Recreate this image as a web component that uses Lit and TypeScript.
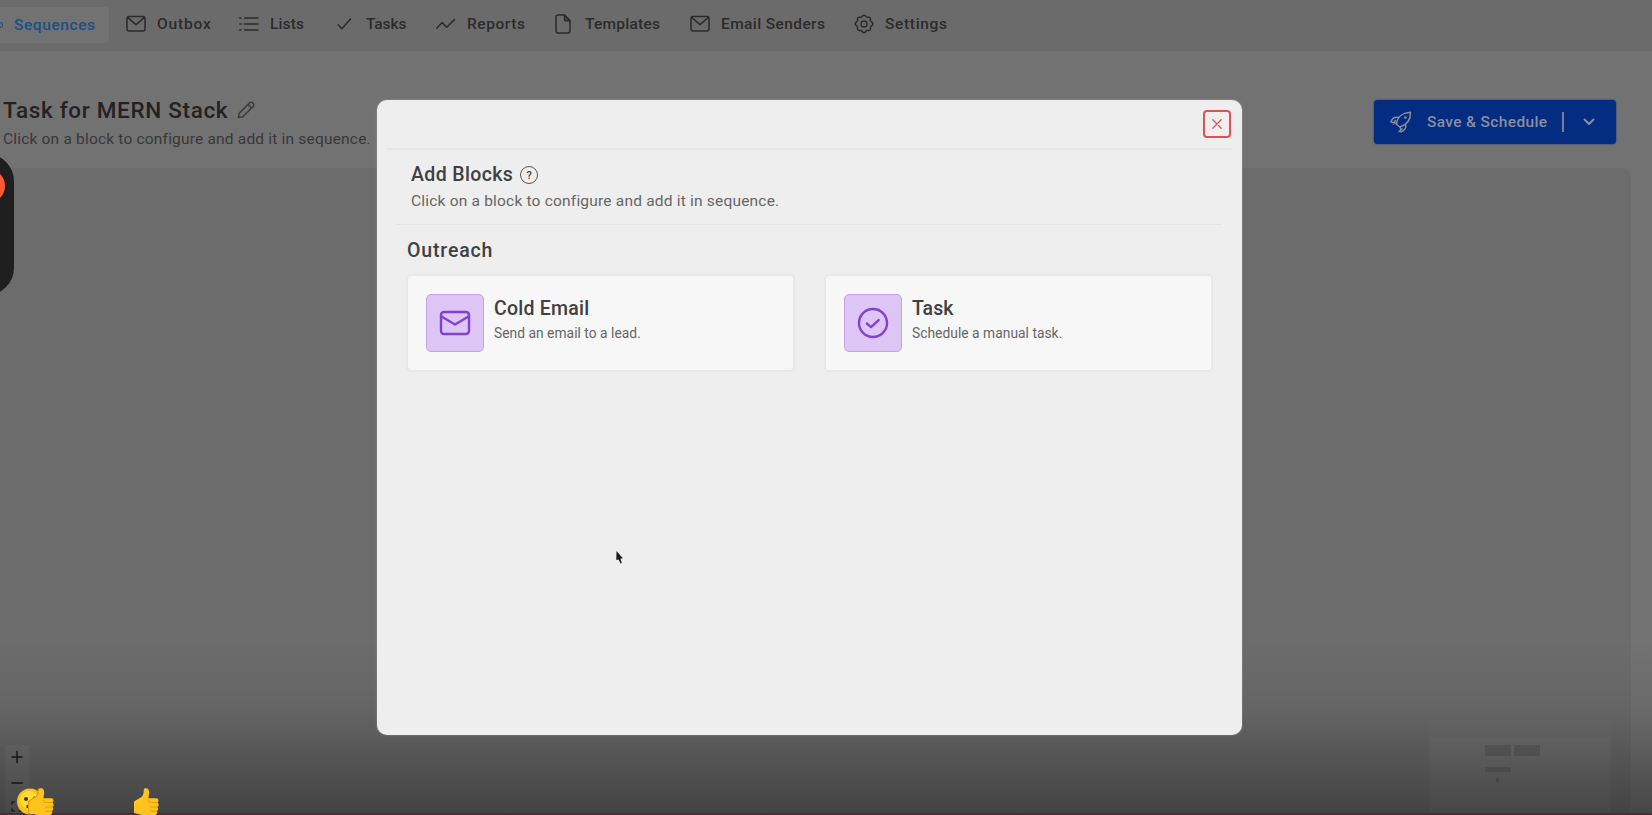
import { LitElement, html, css, svg } from "lit";
import { customElement } from "lit/decorators.js";

const icons: Record<string, unknown> = {
  mail: svg`<rect x="1" y="2.5" width="18" height="14.5" rx="2"/><path d="M1.6 3.4 10 10.6l8.4-7.2"/>`,
  list: svg`<path d="M5.5 4H19M5.5 10H19M5.5 16H19"/><path d="M.8 4h1.2M.8 10h1.2M.8 16h1.2"/>`,
  check: svg`<path d="m2.2 10.8 3.6 4L14.500 5"/>`,
  trend: svg`<path d="m.7 14.2 5.4-5.6 4.600 4.600L18.400 5.600"/>`,
  file: svg`<path d="M2 3.200A2.200 2.200 0 0 1 4.200 1h6.300L16 6.700v10.100A2.200 2.200 0 0 1 13.800 19H4.200A2.200 2.200 0 0 1 2 16.800z"/><path d="M10.500 1v4.700a1 1 0 0 0 1 1H16z" fill="currentColor" fill-opacity=".4"/>`,
  gear: svg`<path d="M10 1.200c1.500 0 1.700 1.500 2.700 1.900s2.200-.5 3.200.5 .1 2.200.5 3.200 2.400 1.200 2.400 3.200-1.900 1.700-2.300 2.700.6 2.200-.5 3.300-2.300.1-3.300.5-1.200 2.300-2.700 2.300-1.700-1.900-2.700-2.300-2.200.6-3.300-.5-.1-2.300-.5-3.300S1.200 11.500 1.200 10s1.900-2.200 2.300-3.200-.5-2.200.5-3.200 2.300-.1 3.300-.5S8.500 1.200 10 1.200z"/><circle cx="10" cy="10" r="3"/>`,
};

const navItems = [
  { id: "outbox", label: "Outbox", icon: "mail" },
  { id: "lists", label: "Lists", icon: "list" },
  { id: "tasks", label: "Tasks", icon: "check" },
  { id: "reports", label: "Reports", icon: "trend" },
  { id: "templates", label: "Templates", icon: "file" },
  { id: "senders", label: "Email Senders", icon: "mail" },
  { id: "settings", label: "Settings", icon: "gear" },
];

const thumb = svg`<path fill="#ffc31f" d="M1 13.500 8.500 9c2-1.600 2.300-4.500 2.300-7.500C11 .2 12.500 0 13.700.3c2.300.7 2.700 3.200 2.400 5.500l-.7 4.400h7.800c2.700 0 2.900 3.500 1 4.300 2 .9 1.900 3.700.2 4.400 1.300 1 1 3.600-.7 4.200 1 1 .6 3.900-1.900 3.900H9L1 25z"/><path class="line" d="M24.300 14.500h-6.500c-1.800 0-2.400-1.100-2.200-2.300M24.400 19h-6.800M23.700 23.200h-6"/>`;

@customElement("app-root")
export class AppRoot extends LitElement {
  static styles = css`
    :host {
      display: block;
      position: relative;
      width: 100%;
      height: 815px;
      overflow: hidden;
      background: #727272;
      color: #2b2b2b;
      font-family: Roboto, "Liberation Sans", sans-serif;
      font-size: 15.5px;
    }
    * { box-sizing: border-box; }
    svg { display: block; fill: none; stroke: currentColor; stroke-width: 1.5; stroke-linecap: round; stroke-linejoin: round; flex: none; }
    .page { display: flex; flex-direction: column; height: 100%; }
    .nav {
      display: grid;
      grid-template-columns: 126px 113px 97px 100px 118px 136px 164px auto;
      height: 51px;
      padding-bottom: 3px;
      align-items: center;
      background: #6b6b6b;
      border-bottom: 1px solid #686868;
      font-weight: 500;
    }
    .active { display: flex; align-items: center; width: 109px; height: 36px; background: #727272; border-radius: 0 3px 3px 0; color: #1b4f87; letter-spacing: .58px; margin-top: 2px; }
    .dot { width: 3px; height: 6px; margin-right: 11px; border: 1.5px solid #1b4f87; border-left: 0; border-radius: 0 4px 4px 0; }
    .item { display: flex; align-items: center; gap: 11px; white-space: nowrap; }
    .outbox { letter-spacing: .85px; }
    .lists { letter-spacing: .14px; }
    .tasks { letter-spacing: -.1px; }
    .tasks span { margin-left: -1px; }
    .reports { letter-spacing: .57px; }
    .templates { letter-spacing: .25px; }
    .senders { letter-spacing: .4px; }
    .settings { letter-spacing: .66px; }
    .head { display: flex; justify-content: space-between; padding: 44px 36px 0 3px; height: 117px; }
    .title { display: flex; align-items: center; height: 30px; gap: 9px; font-size: 22.5px; font-weight: 500; letter-spacing: .68px; color: #222; }
    .title svg { color: #3c3c3c; }
    .sub { margin-top: 4px; line-height: 20px; letter-spacing: .19px; color: #383838; }
    .save { display: flex; align-items: center; width: 242px; height: 44px; margin-top: 5px; padding-left: 15px; border-radius: 4px; background: #042c80; box-shadow: 0 0 2px #042c80; color: #8b8ea0; font-weight: 500; letter-spacing: .35px; }
    .save-label { margin-left: 14px; width: 135px; }
    .bar { width: 2px; height: 20px; background: #777c98; margin-right: 19px; }
    .canvas { flex: 1; display: flex; justify-content: space-between; align-items: flex-end; width: 1631px; border-radius: 0 10px 0 0; background: #6c6c6c; }
    .zoom { display: flex; flex-direction: column; align-items: center; width: 24px; height: 70px; margin-left: 5px; padding-top: 4px; background: #727272; color: #1c1c1c; gap: 9px; }
    .zoom svg:last-child { color: #2c2c2c; }
    .mini { width: 180px; height: 78px; margin-right: 21px; padding: 8px 0 0 55px; background: #727272; box-shadow: 0 -15px 2px 4px #6e6e6e; }
    .nodes { display: flex; gap: 3px; }
    .node { width: 26px; height: 11px; background: #636363; border-radius: 1px; }
    .thin { height: 5px; margin-top: 11px; }
    .tick { width: 3px; height: 4px; margin: 6px 0 0 11px; background: #5e5e5e; }
    .fade { position: absolute; inset: 640px 0 0 0; background: linear-gradient(rgba(0,0,0,0), rgba(0,0,0,.07) 40%, rgba(0,0,0,.38)); border-bottom: 2px solid #4a2e35; }
    .modal { position: absolute; left: 377px; top: 100px; width: 865px; height: 635px; border-radius: 10px; background: #eee; box-shadow: 0 0 2px rgba(255,255,255,.35); color: #404040; padding: 0 10px; }
    .bar-top { display: flex; justify-content: flex-end; height: 50px; padding: 10px 1px 0 0; border-bottom: 2px solid #e6e6e6; }
    .close { display: grid; place-items: center; width: 28px; height: 28px; padding: 0; border: 2px solid #de5058; border-radius: 4px; background: #f2eeee; color: #d25a60; }
    .close svg { stroke-width: 1.3; }
    .intro { height: 75px; margin: 0 10px; padding: 11px 14px 0; border-bottom: 1px solid #e3e3e6; }
    .h { display: flex; align-items: center; gap: 7px; height: 26px; font-size: 19.5px; font-weight: 500; letter-spacing: .38px; }
    .help { display: grid; place-items: center; width: 18px; height: 18px; border: 1.5px solid #555; border-radius: 50%; font-size: 11px; letter-spacing: 0; margin-top: 2px; }
    .lead { margin-top: 4px; line-height: 20px; letter-spacing: .2px; color: #666; }
    .section { margin: 13px 0 0 20px; height: 26px; line-height: 26px; font-size: 19.5px; font-weight: 500; letter-spacing: .85px; }
    .cards { display: grid; grid-template-columns: 389px 389px; gap: 29px; margin: 10px 0 0 19px; }
    .card { display: flex; gap: 10px; height: 98px; padding: 18px; border: 2px solid #e8e8e8; border-radius: 5px; background: #f7f7f7; }
    .tile { display: grid; place-items: center; width: 58px; height: 58px; border: 1.5px solid #c3a4ea; border-radius: 5px; background: #ddc5f5; color: #8341d2; }
    .tile svg { stroke-width: 2.4; }
    .name { height: 26px; line-height: 26px; margin-top: 2px; font-size: 19.5px; font-weight: 500; letter-spacing: .25px; }
    .name.task { letter-spacing: 0; }
    .desc { line-height: 20px; margin-top: 1px; font-size: 13.8px; letter-spacing: .03px; color: #666; }
    .recorder { position: absolute; left: -40px; top: 154px; width: 54px; height: 141px; border-radius: 27px; background: #1f1f1f; overflow: hidden; }
    .rec { width: 34px; height: 34px; margin: 15px 0 0 11px; border-radius: 50%; background: #ff5a36; }
    .cursor { position: absolute; left: 615px; top: 550px; stroke: none; }
    .emoji { position: absolute; top: 788px; stroke: none; }
    .line { stroke: #e59600; stroke-width: .9; }
    .edge { stroke: #e59600; stroke-width: 2; }
    .save svg:last-child { stroke-width: 2; }
    .e1 { left: 17px; }
    .e2 { left: 133px; }
  `;

  render() {
    return html`
      <div class="page">
        <nav class="nav">
          <div class="active"><i class="dot"></i>Sequences</div>
          ${navItems.map((n) => html`<div class="item ${n.id}"><svg width="20" height="20" viewBox="0 0 20 20">${icons[n.icon]}</svg><span>${n.label}</span></div>`)}
        </nav>
        <header class="head">
          <div>
            <div class="title">Task for MERN Stack
              <svg width="18" height="18" viewBox="0 0 18 18"><path d="m1.500 16.500.8-4.400L12.600 1.800a2.100 2.100 0 0 1 3 0l.6.6a2.100 2.100 0 0 1 0 3L5.900 15.700zM11 3.500l3.500 3.500"/></svg>
            </div>
            <div class="sub">Click on a block to configure and add it in sequence.</div>
          </div>
          <div class="save">
            <svg width="24" height="24" viewBox="0 0 24 24"><path d="M7.500 14.500C7.800 7.500 13 2.800 21.500 2.200c.2 7.200-3.500 12.500-10.500 14.800z"/><path d="M9.500 7.500C6 6.800 3 8.500 2 12l5.500 1.200M16.500 14.500c1 3.500-1 6-4.500 7.500l-.8-5M6.200 10.500 4.500 14M13 19l-3 2.500"/><circle cx="16.300" cy="7.500" r=".6"/></svg>
            <span class="save-label">Save &amp; Schedule</span><i class="bar"></i>
            <svg width="12" height="8" viewBox="0 0 12 8"><path d="m1.500 1.500 4.500 4.500 4.500-4.500"/></svg>
          </div>
        </header>
        <main class="canvas">
          <div class="zoom">
            <svg width="12" height="16" viewBox="0 0 12 16"><path d="M1 8h10M6 2.500v11"/></svg>
            <svg width="12" height="16" viewBox="0 0 12 16"><path d="M1 9h10"/></svg>
            <svg width="12" height="14" viewBox="0 0 12 14"><path d="M1 5V3h2M9 3h2v2M1 10v2h2M11 10v2H9"/></svg>
          </div>
          <div class="mini">
            <div class="nodes"><div class="node"></div><div class="node"></div></div>
            <div class="node thin"></div><div class="tick"></div>
          </div>
        </main>
      </div>
      <div class="fade"></div>
      <section class="modal">
        <div class="bar-top">
          <button class="close" aria-label="Close"><svg width="10" height="10" viewBox="0 0 10 10"><path d="m.8.8 8.400 8.400M9.200.8.8 9.200"/></svg></button>
        </div>
        <div class="intro">
          <div class="h">Add Blocks <span class="help">?</span></div>
          <div class="lead">Click on a block to configure and add it in sequence.</div>
        </div>
        <div class="section">Outreach</div>
        <div class="cards">
          <div class="card">
            <div class="tile"><svg width="32" height="26" viewBox="0 0 32 26"><rect x="2" y="2" width="28" height="22" rx="3"/><path d="m2.500 6.500 13.500 8 13.500-8"/></svg></div>
            <div><div class="name">Cold Email</div><div class="desc">Send an email to a lead.</div></div>
          </div>
          <div class="card">
            <div class="tile"><svg width="32" height="32" viewBox="0 0 32 32"><circle cx="16" cy="16" r="14"/><path d="m9.800 16.500 4.200 3.600 7.700-7"/></svg></div>
            <div><div class="name task">Task</div><div class="desc">Schedule a manual task.</div></div>
          </div>
        </div>
      </section>
      <div class="recorder"><div class="rec"></div></div>
      <svg class="cursor" width="10" height="16" viewBox="0 0 10 16"><path fill="#1c1c1c" d="M1.500 1 7.800 8.200 5.500 8.800 6.800 13 5.600 13.400 3.600 9.600 1.300 10z"/></svg>
      <svg class="emoji e1" width="39" height="27" viewBox="0 0 39 27">
        <circle cx="13" cy="13.500" r="13" fill="#fcc21b"/><circle cx="12" cy="12" r="9" fill="#ffdc30"/>
        <circle cx="9" cy="11" r="2" fill="#493018"/><path fill="#493018" d="M16 9.500q1.500-2 3 0zM9.500 17h1.500v3H9.500z"/>
        <g transform="translate(11 0)"><path class="edge" d="M1 25V13.500L8.500 9c2-1.600 2.300-4.500 2.300-7.500"/>${thumb}</g>
      </svg>
      <svg class="emoji e2" width="27" height="27" viewBox="0 0 27 27">${thumb}</svg>
    `;
  }
}
